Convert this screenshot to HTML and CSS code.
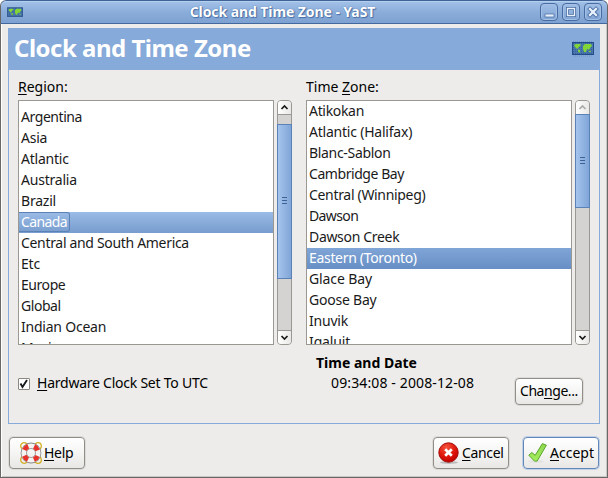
FILE: index.html
```html
<!DOCTYPE html>
<html lang="en">
<head>
<meta charset="utf-8">
<title>Clock and Time Zone - YaST</title>
<link rel="stylesheet" href="styles.css">
</head>
<body>
<svg class="defs" width="0" height="0" aria-hidden="true">
  <defs>
    <pattern id="grid" width="2" height="2" patternUnits="userSpaceOnUse"><path d="M0 .5h2M.5 0v2" stroke="#8fb2dc" stroke-width="1" opacity=".25"/></pattern>
    <symbol id="map" viewBox="0 0 22 14">
      <rect x=".5" y=".5" width="21" height="12" fill="#33619b" stroke="#244c88"/>
      <path d="M2 3l2-1 4 0 1 1-2 2-1 1-1 1-2-2zM6 7l2 1 0 2-1 1-1-2zM11 4l2-2 6 0 1 2-2 2-1 2-2-1-1 3-2 0-1-3zM17 9h2v1h-2z" fill="#7fdc10"/>
      <rect x="1" y="1" width="20" height="11" fill="url(#grid)"/>
    </symbol>
    <radialGradient id="red" cx=".4" cy=".25" r=".8"><stop offset="0" stop-color="#f5523c"/><stop offset=".6" stop-color="#dd1408"/><stop offset="1" stop-color="#b00"/></radialGradient>
    <linearGradient id="green" x2="0" y2="1"><stop offset="0" stop-color="#8fd850"/><stop offset="1" stop-color="#a4ee5c"/></linearGradient>
  </defs>
</svg>
<div class="window">
  <header class="titlebar">
    <svg class="app-icon" width="16" height="11"><use href="#map"/></svg>
    <h1 class="caption">Clock and Time Zone - YaST</h1>
    <div class="controls">
      <span class="control"><svg width="18" height="18"><path d="M5 11h9v3h-9z" fill="#e9f1fb" stroke="#45699f" stroke-width=".7"/></svg></span>
      <span class="control"><svg width="18" height="18"><path d="M5.500 5.500h7v7h-7z" fill="none" stroke="#45699f" stroke-width="3"/><path d="M5.500 5.500h7v7h-7z" fill="none" stroke="#e9f1fb" stroke-width="1.400"/></svg></span>
      <span class="control"><svg width="18" height="18"><path d="M6 6l6 6M12 6l-6 6" stroke="#45699f" stroke-width="4" stroke-linecap="square"/><path d="M6 6l6 6M12 6l-6 6" stroke="#e9f1fb" stroke-width="2.400" stroke-linecap="square"/></svg></span>
    </div>
  </header>
  <main class="panel">
    <div class="heading">
      <h2 class="heading-text">Clock and Time Zone</h2>
      <svg width="22" height="18"><path d="M1 1.500h20M1 16h20" stroke="#6f94c6" stroke-dasharray="1 1"/><use href="#map" y="2" width="22" height="14"/></svg>
    </div>
    <div class="columns">
      <section class="column region">
        <div class="label"><u>R</u>egion:</div>
        <div class="picker">
          <ul class="list list-scrolled">
            <li class="tighter">Argentina</li><li>Asia</li><li>Atlantic</li><li>Australia</li><li>Brazil</li>
            <li class="selected tightest"><span class="focus">Canada</span></li>
            <li class="tight">Central and South America</li><li>Etc</li><li class="tighter">Europe</li><li class="tighter">Global</li><li>Indian Ocean</li><li>Mexico</li>
          </ul>
          <div class="scrollbar">
            <span class="arrow up"><svg width="13" height="13"><path d="M3.500 8l3-3 3 3" /></svg></span>
            <span class="thumb thumb-region"><i class="grip"></i></span>
            <span class="arrow down"><svg width="13" height="13"><path d="M3.500 5l3 3 3-3" /></svg></span>
          </div>
        </div>
      </section>
      <section class="column zone">
        <div class="label">Time <u>Z</u>one:</div>
        <div class="picker">
          <ul class="list">
            <li class="tight">Atikokan</li><li>Atlantic (Halifax)</li><li class="tight">Blanc-Sablon</li><li class="tighter">Cambridge Bay</li><li class="tight">Central (Winnipeg)</li><li class="tightest">Dawson</li><li class="tight">Dawson Creek</li>
            <li class="selected active tight">Eastern (Toronto)</li>
            <li class="loose">Glace Bay</li><li>Goose Bay</li><li>Inuvik</li><li class="loose">Iqaluit</li>
          </ul>
          <div class="scrollbar">
            <span class="arrow up disabled"><svg width="13" height="13"><path d="M3.500 8l3-3 3 3" /></svg></span>
            <span class="thumb thumb-zone"><i class="grip"></i></span>
            <span class="arrow down"><svg width="13" height="13"><path d="M3.500 5l3 3 3-3" /></svg></span>
          </div>
        </div>
      </section>
    </div>
    <div class="settings">
      <div class="utc">
        <span class="checkbox"><svg width="12" height="12"><path d="M2.500 5.500l2 3.500 4.500-7" fill="none" stroke="#1a1a1a" stroke-width="1.900"/></svg></span>
        <span class="utc-text"><u>H</u>ardware Clock Set To UTC</span>
      </div>
      <div class="clock">
        <div class="clock-title">Time and Date</div>
        <div class="clock-value">09:34:08 - 2008-12-08</div>
      </div>
      <div class="button change"><span>Cha<u>n</u>ge...</span></div>
    </div>
  </main>
  <footer class="actions">
    <div class="button help">
      <svg width="24" height="24" viewBox="0 0 24 24" fill="none">
        <g stroke="#d3ae24" stroke-width="1.300"><circle cx="5" cy="5" r="3.300"/><circle cx="19" cy="5" r="3.300"/><circle cx="5" cy="19" r="3.300"/><circle cx="19" cy="19" r="3.300"/></g>
        <circle cx="12" cy="12" r="7.200" stroke="#888" stroke-width="6.400"/>
        <circle cx="12" cy="12" r="7.200" stroke="#f4f4f2" stroke-width="4.800"/>
        <circle cx="12" cy="12" r="7.200" stroke="#e6332b" stroke-width="4.800" stroke-dasharray="5.310 6" stroke-dashoffset="-3"/>
      </svg><span><u>H</u>elp</span>
    </div>
    <div class="button cancel">
      <svg width="24" height="24" viewBox="0 0 24 24">
        <ellipse cx="12" cy="21.500" rx="9" ry="1.500" fill="#bbb"/><circle cx="11.500" cy="11.500" r="9.700" fill="url(#red)" stroke="#a40c06"/>
        <path d="M8.200 8.200l6.600 6.600M14.800 8.200l-6.600 6.600" stroke="#fff" stroke-width="2.700"/>
      </svg><span><u>C</u>ancel</span>
    </div>
    <div class="button accept">
      <svg width="24" height="24" viewBox="0 0 24 24">
        <ellipse cx="10" cy="20.500" rx="8" ry="1.500" fill="#e2e2e2"/><path d="M2.800 14.200l3-2.700 3.400 2.800 7.200-11.700 4 1.600-9.300 15.900h-2.600z" fill="url(#green)" stroke="#59a52c" stroke-width="1" stroke-linejoin="round"/>
      </svg><span><u>A</u>ccept</span>
    </div>
  </footer>
</div>
</body>
</html>
```
FILE: styles.css
```css
* { box-sizing: border-box; }
body { margin: 0; background: #fff; font: 14px/21px "Noto Sans", "Open Sans", sans-serif; color: #000; }
.defs { position: absolute; }
svg { display: block; flex: none; }
u { text-decoration: underline; text-decoration-thickness: 1px; text-underline-offset: 2px; text-decoration-skip-ink: none; }

.window {
  width: 608px; height: 478px; overflow: hidden;
  display: flex; flex-direction: column;
  background: #edecea;
  border: 1px solid #6a6867; border-top: 0;
  border-radius: 6px 6px 0 0;
  box-shadow: inset 1px 0 #fff, inset -1px -1px #c9c7c5;
}
.titlebar {
  flex: none; height: 24px; margin: 0 -1px; padding: 0 5px 0 6px;
  display: flex; align-items: center;
  background: linear-gradient(#a3c2e9, #8badd9 50%, #7da1d2);
  border: 1px solid #3f6396; border-bottom-color: #42689e;
  border-radius: 6px 6px 0 0;
  box-shadow: inset 0 1px #b5cff0;
}
.app-icon { width: 16px; }
.caption {
  flex: 1; margin: 0; padding-left: 2px; text-align: center;
  font-size: 14px; line-height: 22px; font-weight: 700; color: #fff;
  letter-spacing: -.08px; white-space: nowrap;
  text-shadow: 0 0 1px #355a91, 1px 1px 1px #4a70a8;
}
.controls { display: flex; gap: 4px; }
.control {
  width: 18px; height: 18px; border: 1px solid #476ca2; border-radius: 4px;
  background: linear-gradient(#a0bfe6, #7fa3d4);
  box-shadow: inset 0 0 0 1px #a4c0e5;
}
.control svg { margin: -1px; }

.panel { flex: none; width: 592px; height: 396px; margin: 4px 0 0 7px; border: 1px solid #86aad9; border-top: 0; }
.heading {
  height: 42px; padding: 0 6px; margin: 0 -1px;
  display: flex; align-items: center; justify-content: space-between;
  background: #86aad9;
}
.heading-text { margin: 0; font-size: 24px; line-height: 40px; height: 42px; font-weight: 700; color: #fff; letter-spacing: -.5px; }
.columns { display: flex; gap: 14px; padding: 6px 9px 0; }
.region { width: 274px; }
.zone { width: 284px; }
.label { height: 24px; }
.picker { display: flex; gap: 3px; height: 245px; }
.list {
  flex: 1; margin: 0; padding: 0; list-style: none; overflow: hidden;
  background: #fff; border: 1px solid #9b9792; color: #1a1a1a; white-space: nowrap;
}
.list-scrolled { padding-top: 6px; }
.list li { height: 21px; line-height: 19px; padding-left: 2px; letter-spacing: -.22px; }
.list .loose { letter-spacing: -.12px; }
.list .tight { letter-spacing: -.32px; }
.list .tighter { letter-spacing: -.44px; }
.list .tightest { letter-spacing: -.62px; }
.list .selected { color: #fff; background: linear-gradient(#9bbce7, #88abd9 50%, #789dce); }
.list .active { background: linear-gradient(#80a5d7, #678fc5); }
.focus { display: block; width: 51px; height: 20px; margin-left: -2px; padding-left: 2px; border: 1px solid #5b82b7; border-left: 0; border-radius: 0 3px 3px 0; line-height: 17px; }

.scrollbar {
  width: 15px; display: flex; flex-direction: column;
  background: #d4d3d1; border: 1px solid #9b9792; border-radius: 4px;
}
.arrow { flex: none; height: 14px; background: linear-gradient(90deg, #fff, #e9e8e6); border-radius: 3px; }
.arrow path { fill: none; stroke: #1a1a1a; stroke-width: 1.700; }
.disabled path { stroke: #aaa; }
.up { border-bottom: 1px solid #9b9792; border-radius: 3px 3px 0 0; }
.down { margin-top: auto; border-top: 1px solid #9b9792; border-radius: 0 0 3px 3px; }
.thumb {
  display: flex; align-items: center; justify-content: center; margin: 0 -1px;
  background: linear-gradient(90deg, #a5c4ed, #80a5d7); border: 1px solid #5b82b7;
}
.thumb-region { height: 155px; margin-top: 9px; padding-bottom: 2px; }
.thumb-zone { height: 94px; margin-top: -1px; padding-bottom: 2px; }
.grip { width: 5px; height: 7px; background: repeating-linear-gradient(#3d6295 0 1px, transparent 1px 3px); }

.settings { display: flex; padding: 7px 9px 0; align-items: flex-start; }
.utc { width: 298px; display: flex; align-items: center; gap: 7px; margin-top: 21px; }
.utc-text { letter-spacing: -.24px; line-height: 19px; height: 21px; }
.checkbox { width: 12px; height: 12px; background: #fff; border: 1px solid #8b8782; border-radius: 1px; }
.checkbox svg { margin: -1px; }
.clock { width: 199px; }
.clock-title { font-weight: 700; height: 20px; }
.clock-value { margin-left: 15px; letter-spacing: .13px; }
.button {
  display: flex; align-items: center; height: 32px; width: 76px; white-space: nowrap;
  background: linear-gradient(#fff, #f5f5f4 50%, #e8e7e5);
  border: 1px solid #918d89; border-radius: 4px;
  box-shadow: 0 0 0 1px #dddbd8;
}
.button span { height: 21px; line-height: 19px; }
.change { width: 68px; height: 27px; padding-left: 4px; margin-top: 26px; letter-spacing: -.45px; }
.actions { display: flex; padding: 13px 8px 0; }
.help { padding-left: 9px; }
.help span { margin-left: 1px; letter-spacing: -.3px; }
.cancel { margin-left: auto; padding-left: 3px; letter-spacing: -.35px; }
.cancel span { margin-left: 1px; }
.accept { margin-left: 14px; padding-left: 2px; border-color: #6288bb; box-shadow: 0 0 0 1px #c0d0e5; }
```
